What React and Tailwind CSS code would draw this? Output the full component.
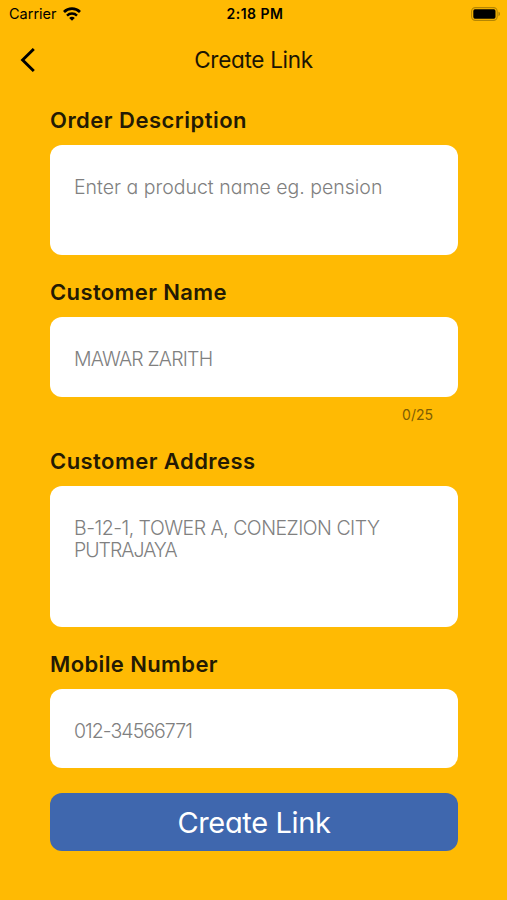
const fields = [
  {
    label: 'Order Description',
    labelClass: 'tracking-[0.48px]',
    lines: [{ text: 'Enter a product name eg. pension', className: 'tracking-[0px]' }],
    boxClass: 'h-[110px]',
    wrapClass: 'h-[172px]',
  },
  {
    label: 'Customer Name',
    labelClass: 'tracking-[0.38px]',
    lines: [{ text: 'MAWAR ZARITH', className: 'tracking-[-0.8px]' }],
    boxClass: 'h-[80px]',
    wrapClass: 'h-[169px]',
    counter: '0/25',
  },
  {
    label: 'Customer Address',
    labelClass: 'tracking-[0.45px]',
    lines: [
      { text: 'B-12-1, TOWER A, CONEZION CITY', className: 'tracking-[-0.5px]' },
      { text: 'PUTRAJAYA', className: 'tracking-[-1px]' },
    ],
    boxClass: 'h-[141px]',
    wrapClass: 'h-[203px]',
  },
  {
    label: 'Mobile Number',
    labelClass: 'tracking-[0.38px]',
    lines: [{ text: '012-34566771', className: 'tracking-[-0.95px]' }],
    boxClass: 'h-[79px]',
    wrapClass: 'h-[130px]',
  },
]

const WifiIcon = () => (
  <svg width="18" height="14" viewBox="0 0 18 14" fill="none" stroke="#000" strokeWidth="2.7">
    <path d="M1 5a11.3 11.3 0 0 1 16 0" />
    <path d="M4 8.6a7.1 7.1 0 0 1 10 0" strokeWidth="2.4" />
    <path d="M9 13.8 6.2 11a3.9 3.9 0 0 1 5.6 0z" fill="#000" stroke="none" />
  </svg>
)

const BatteryIcon = () => (
  <svg width="30" height="14" viewBox="0 0 30 14">
    <rect x="0.6" y="0.6" width="25.6" height="12.8" rx="3.8" fill="none" stroke="#b58603" strokeWidth="1.1" />
    <rect x="2.3" y="2.3" width="22.2" height="9.4" rx="1.6" fill="#000" />
    <path d="M27.5 4.8c1.9.6 1.9 3.8 0 4.4z" fill="#a67c05" />
  </svg>
)

const StatusBar = () => (
  <div className="grid h-7 grid-cols-3 items-center pl-[9px] pr-[6px] text-black">
    <div className="flex items-center gap-[6px]">
      <span className="text-[14.5px] leading-none tracking-[0px]">Carrier</span>
      <WifiIcon />
    </div>
    <div className="text-center text-[14px] font-semibold leading-none tracking-[0.5px]">2:18 PM</div>
    <div className="flex justify-end">
      <BatteryIcon />
    </div>
  </div>
)

const Field = ({ label, labelClass, lines, boxClass, wrapClass, counter }) => (
  <div className={wrapClass}>
    <div className="flex h-[37px] items-start">
      <span className={`text-[22px] font-semibold leading-6 text-[#241a04] ${labelClass}`}>{label}</span>
    </div>
    <div className={`rounded-xl bg-white px-6 pt-[31px] ${boxClass}`}>
      {lines.map((line) => (
        <div
          key={line.text}
          className="h-[22px] whitespace-nowrap text-[19.5px] font-light leading-[22px] text-[#808080] [font-feature-settings:'cv11']"
        >
          <span className={line.className}>{line.text}</span>
        </div>
      ))}
    </div>
    {counter && (
      <div className="pr-[25px] pt-[10px] text-right text-[14px] leading-4 text-[#7d5d04]">{counter}</div>
    )}
  </div>
)

const App = () => {
  return (
    <div className="flex h-[900px] w-[507px] flex-col overflow-hidden bg-[#ffba03] font-['Inter',sans-serif]">
      <StatusBar />

      <header className="grid h-[80px] grid-cols-[50px_1fr_50px] items-start">
        <div className="pl-5 pt-5">
          <svg width="16" height="24" viewBox="0 0 16 24" fill="none" stroke="#000" strokeWidth="2.9">
            <path d="M13.8 1 2.6 12l11.2 11" />
          </svg>
        </div>
        <h1 className="pt-5 text-center text-[22.5px] leading-6 tracking-[-0.3px] text-[#1c1503] [font-feature-settings:'cv11']">
          <span>Create Link</span>
        </h1>
      </header>

      <main className="flex flex-col pl-[50px] pr-[49px]">
        {fields.map((field) => (
          <Field key={field.label} {...field} />
        ))}
        <button
          type="button"
          className="mt-[11px] h-[58px] rounded-xl bg-[#3f67ae] text-[29px] leading-none tracking-[-0.35px] text-white [font-feature-settings:'cv11']"
        >
          <span>Create Link</span>
        </button>
      </main>
    </div>
  )
}

export default App
